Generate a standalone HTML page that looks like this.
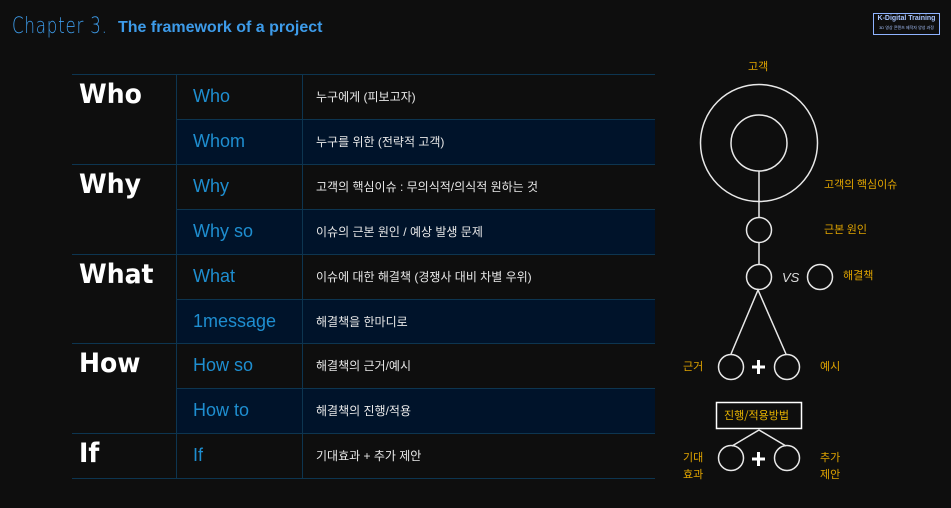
<!DOCTYPE html>
<html><head><meta charset="utf-8"><style>
body{margin:0;width:951px;height:508px;background:#0e0e0e;overflow:hidden;position:relative;font-family:"Liberation Sans","Noto Sans CJK KR",sans-serif}
.a{position:absolute}
.t1{left:12px;top:14px;color:#3d9be9;font-size:22px;font-family:"DejaVu Sans",sans-serif;font-weight:200;transform:scaleX(0.76);transform-origin:left;letter-spacing:1px}
.t2{left:118px;top:19px;color:#3d9be9;font-size:16px;font-weight:bold}
.logo{left:873px;top:13px;width:65px;height:20px;border:1px solid #8fb3ff;color:#a8c4ff;font-size:7px;font-weight:bold;text-align:center;line-height:9px}
.row{position:absolute;left:72px;width:583px;height:44px;border-top:1px solid #0d3550}
.nav{position:absolute;left:176px;width:479px;height:44px;background:#00132a}
.vl{position:absolute;width:1px;background:#0d3550}
.big{position:absolute;left:79px;color:#fff;font-weight:900;font-size:27px;font-family:"DejaVu Sans",sans-serif;transform:scaleX(0.93);transform-origin:left}
.sub{position:absolute;left:193px;color:#1e8ed0;font-size:18px}
.kr{position:absolute;left:316px;color:#e8e8e8;font-size:12px}
.y{position:absolute;color:#e0a400;font-size:11px;font-family:"Noto Sans CJK KR",sans-serif}
</style></head><body>
<div class="a t1">Chapter 3.</div>
<div class="a t2">The framework of a project</div>
<div class="a logo">K-Digital Training<br><span style="font-size:4px;font-weight:normal">3D 영상 콘텐츠 제작자 양성 과정</span></div>

<div class="nav" style="top:120px"></div>
<div class="nav" style="top:210px"></div>
<div class="nav" style="top:300px"></div>
<div class="nav" style="top:389px"></div>
<div class="row" style="top:74px"></div>
<div class="row" style="top:119px;left:176px;width:479px"></div>
<div class="row" style="top:164px"></div>
<div class="row" style="top:209px;left:176px;width:479px"></div>
<div class="row" style="top:254px"></div>
<div class="row" style="top:299px;left:176px;width:479px"></div>
<div class="row" style="top:343px"></div>
<div class="row" style="top:388px;left:176px;width:479px"></div>
<div class="row" style="top:433px"></div>
<div class="row" style="top:478px;height:0"></div>
<div class="vl" style="left:176px;top:74px;height:404px"></div>
<div class="vl" style="left:302px;top:74px;height:404px"></div>

<div class="big" style="top:79px">Who</div>
<div class="big" style="top:169px">Why</div>
<div class="big" style="top:259px">What</div>
<div class="big" style="top:348px">How</div>
<div class="big" style="top:438px">If</div>

<div class="sub" style="top:86px">Who</div>
<div class="sub" style="top:131px">Whom</div>
<div class="sub" style="top:176px">Why</div>
<div class="sub" style="top:221px">Why so</div>
<div class="sub" style="top:266px">What</div>
<div class="sub" style="top:311px">1message</div>
<div class="sub" style="top:355px">How so</div>
<div class="sub" style="top:400px">How to</div>
<div class="sub" style="top:445px">If</div>

<div class="kr" style="top:88px">누구에게 (피보고자)</div>
<div class="kr" style="top:133px">누구를 위한 (전략적 고객)</div>
<div class="kr" style="top:178px">고객의 핵심이슈 : 무의식적/의식적 원하는 것</div>
<div class="kr" style="top:223px">이슈의 근본 원인 / 예상 발생 문제</div>
<div class="kr" style="top:268px">이슈에 대한 해결책 (경쟁사 대비 차별 우위)</div>
<div class="kr" style="top:313px">해결책을 한마디로</div>
<div class="kr" style="top:357px">해결책의 근거/예시</div>
<div class="kr" style="top:402px">해결책의 진행/적용</div>
<div class="kr" style="top:447px">기대효과 + 추가 제안</div>

<svg class="a" style="left:0;top:0" width="951" height="508">
<g fill="none" stroke="#e8e8e8" stroke-width="1.5">
<circle cx="759" cy="143" r="58.5"/>
<circle cx="759" cy="143" r="28"/>
<line x1="759" y1="171" x2="759" y2="218"/>
<circle cx="759" cy="230" r="12.5"/>
<line x1="759" y1="242" x2="759" y2="265"/>
<circle cx="759" cy="277" r="12.5"/>
<circle cx="820" cy="277" r="12.5"/>
<polyline points="731,354 758,290 786,354"/>
<circle cx="731" cy="367" r="12.5"/>
<circle cx="787" cy="367" r="12.5"/>
<rect x="716.5" y="402.5" width="85" height="26" stroke="#fff"/>
<polyline points="732,446 759,430 786,446"/>
<circle cx="731" cy="458" r="12.5"/>
<circle cx="787" cy="458" r="12.5"/>
</g>
<g stroke="#fff" stroke-width="3"><line x1="752" y1="367" x2="765" y2="367"/><line x1="758.5" y1="360" x2="758.5" y2="374"/>
<line x1="752" y1="459" x2="765" y2="459"/><line x1="758.5" y1="452" x2="758.5" y2="466"/></g>
<text x="782" y="282" fill="#ddd" font-size="13" font-family="Liberation Sans" font-style="italic">VS</text>
</svg>
<div class="y" style="left:748px;top:58px">고객</div>
<div class="y" style="left:824px;top:176px">고객의 핵심이슈</div>
<div class="y" style="left:824px;top:221px">근본 원인</div>
<div class="y" style="left:843px;top:267px">해결책</div>
<div class="y" style="left:683px;top:358px">근거</div>
<div class="y" style="left:820px;top:358px">예시</div>
<div class="y" style="left:724px;top:407px;color:#e8b400">진행/적용방법</div>
<div class="y" style="left:683px;top:449px;line-height:17px">기대<br>효과</div>
<div class="y" style="left:820px;top:449px;line-height:17px">추가<br>제안</div>
</body></html>
